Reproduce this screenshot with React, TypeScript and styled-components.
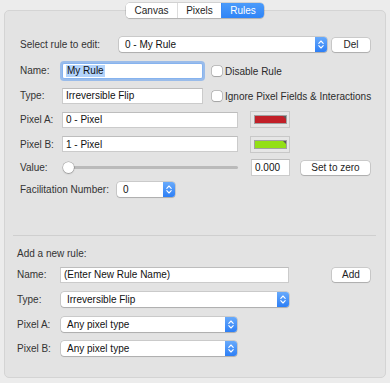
import React from "react";
import styled, { createGlobalStyle } from "styled-components";

const Global = createGlobalStyle`
  html, body { margin: 0; padding: 0; background: #ececec; }
  * { box-sizing: border-box; }
`;

const Window = styled.div`
  width: 390px;
  height: 383px;
  background: #ececec;
  font-family: "Liberation Sans", Arial, sans-serif;
  font-size: 10px;
  color: #2b2b2b;
  display: flex;
  flex-direction: column;
  align-items: center;
  padding-top: 3px;
`;

const Segmented = styled.div`
  position: relative;
  z-index: 1;
  display: flex;
  height: 15px;
  margin-bottom: -8px;
  background: #fff;
  border-radius: 4px;
  box-shadow: 0 0 0 0.5px rgba(0, 0, 0, 0.22), 0 1px 1px rgba(0, 0, 0, 0.12);
  overflow: hidden;
`;

const Segment = styled.div<{ $w: number; $active?: boolean }>`
  width: ${(p) => p.$w}px;
  display: flex;
  align-items: center;
  justify-content: center;
  color: ${(p) => (p.$active ? "#fff" : "#1e1e1e")};
  background: ${(p) => (p.$active ? "linear-gradient(#4b9bfa, #2f84f7)" : "#fff")};
  border-left: 1px solid ${(p) => (p.$active ? "#3b8af5" : "#dcdcdc")};
  &:first-child { border-left: none; }
`;

const Panel = styled.div`
  align-self: stretch;
  margin: 0 4px;
  height: 368px;
  background: #e3e3e3;
  border: 1px solid #d4d4d4;
  border-radius: 5px;
  display: flex;
  flex-direction: column;
`;

const Section = styled.div<{ $pt: number; $pl: number }>`
  display: flex;
  flex-direction: column;
  padding-top: ${(p) => p.$pt}px;
  padding-left: ${(p) => p.$pl}px;
`;

const Row = styled.div<{ $h: number }>`
  height: ${(p) => p.$h}px;
  display: flex;
  align-items: center;
`;

const Label = styled.div<{ $w: number }>`
  width: ${(p) => p.$w}px;
  flex: none;
  color: #333;
  white-space: nowrap;
`;

const Title = styled.div`
  color: #333;
`;

const Gap = styled.div<{ $w: number }>`
  width: ${(p) => p.$w}px;
  flex: none;
`;

const Field = styled.div<{ $w: number; $h?: number; $focus?: boolean }>`
  width: ${(p) => p.$w}px;
  height: ${(p) => p.$h ?? 16}px;
  flex: none;
  background: #fff;
  border: 1px solid ${(p) => (p.$focus ? "#86b3ef" : "#cbcbcb")};
  border-top-color: ${(p) => (p.$focus ? "#86b3ef" : "#bdbdbd")};
  border-radius: ${(p) => (p.$focus ? "2px" : "0")};
  box-shadow: ${(p) => (p.$focus ? "0 0 0 2px rgba(95, 157, 240, 0.55)" : "none")};
  display: flex;
  align-items: center;
  padding-left: 3px;
  color: #111;
  white-space: nowrap;
  overflow: hidden;
`;

const Selected = styled.span`
  background: #b3d4fc;
  line-height: 12px;
  padding: 0 1px;
`;

const Popup = styled.div<{ $w: number }>`
  width: ${(p) => p.$w}px;
  height: 15px;
  flex: none;
  display: flex;
  background: #fff;
  border-radius: 3px;
  box-shadow: 0 0 0 0.5px rgba(0, 0, 0, 0.22), 0 1px 1px rgba(0, 0, 0, 0.14);
  overflow: hidden;
`;

const PopupText = styled.div`
  flex: 1;
  display: flex;
  align-items: center;
  padding-left: 6px;
  color: #111;
  white-space: nowrap;
`;

const Stepper = styled.div`
  width: 12px;
  flex: none;
  background: linear-gradient(#68aafb, #2d7ff6);
  display: flex;
  align-items: center;
  justify-content: center;
`;

const Button = styled.div<{ $w: number }>`
  width: ${(p) => p.$w}px;
  height: 14px;
  flex: none;
  background: #fff;
  border-radius: 3px;
  box-shadow: 0 0 0 0.5px rgba(0, 0, 0, 0.22), 0 1px 1px rgba(0, 0, 0, 0.14);
  display: flex;
  align-items: center;
  justify-content: center;
  color: #1e1e1e;
`;

const CheckGroup = styled.div`
  display: flex;
  align-items: center;
  gap: 3px;
  padding-top: 1px;
`;

const Box = styled.div`
  width: 10px;
  height: 10px;
  background: #fff;
  border-radius: 2.5px;
  box-shadow: 0 0 0 0.5px rgba(0, 0, 0, 0.3), 0 0.5px 1px rgba(0, 0, 0, 0.15);
`;

const CheckText = styled.div`
  color: #2b2b2b;
  white-space: nowrap;
`;

const Well = styled.div`
  width: 40px;
  height: 17px;
  flex: none;
  background: #e6e6e6;
  border: 1px solid #c8c8c8;
  padding: 3px 2px 3px 3px;
  display: flex;
`;

const Swatch = styled.div<{ $c: string }>`
  position: relative;
  flex: 1;
  background: ${(p) => p.$c};
  border: 1px solid #a0a0a0;
  &::after {
    content: "";
    position: absolute;
    top: 0;
    right: 0;
    border-style: solid;
    border-width: 0 3px 3px 0;
    border-color: transparent #5a5a5a transparent transparent;
  }
`;

const Slider = styled.div<{ $w: number }>`
  position: relative;
  width: ${(p) => p.$w}px;
  height: 14px;
  flex: none;
  display: flex;
  align-items: center;
`;

const Track = styled.div`
  flex: 1;
  margin-left: 5px;
  height: 3px;
  border-radius: 2px;
  background: #bababa;
`;

const Knob = styled.div`
  position: absolute;
  left: 1px;
  top: 1.5px;
  width: 11px;
  height: 11px;
  border-radius: 50%;
  background: #fff;
  box-shadow: 0 0 0 0.5px rgba(0, 0, 0, 0.28), 0 1px 1.5px rgba(0, 0, 0, 0.22);
`;

const Separator = styled.div`
  height: 1px;
  background: #cfcfcf;
  margin: 35px 9px 0 8px;
`;

const Chevrons = () => (
  <svg width="8" height="11" viewBox="0 0 8 11">
    <path d="M1.8 4.3 L4 2 L6.2 4.3 M1.8 6.7 L4 9 L6.2 6.7" fill="none" stroke="#fff" strokeWidth="1.1" strokeLinecap="round" strokeLinejoin="round" />
  </svg>
);

const PopUp = ({ w, text }: { w: number; text: string }) => (
  <Popup $w={w}>
    <PopupText>{text}</PopupText>
    <Stepper>
      <Chevrons />
    </Stepper>
  </Popup>
);

const Check = ({ text }: { text: string }) => (
  <CheckGroup>
    <Box />
    <CheckText>{text}</CheckText>
  </CheckGroup>
);

export default function App() {
  return (
    <>
      <Global />
      <Window>
        <Segmented>
          <Segment $w={51}>Canvas</Segment>
          <Segment $w={44}>Pixels</Segment>
          <Segment $w={43} $active>Rules</Segment>
        </Segmented>
        <Panel>
          <Section $pt={21} $pl={15}>
            <Row $h={25}>
              <Label $w={99}>Select rule to edit:</Label>
              <PopUp w={208} text="0 - My Rule" />
              <Gap $w={5} />
              <Button $w={38}>Del</Button>
            </Row>
            <Row $h={27}>
              <Label $w={42}>Name:</Label>
              <Field $w={141} $focus>
                <Selected>My Rule</Selected>
              </Field>
              <Gap $w={9} />
              <Check text="Disable Rule" />
            </Row>
            <Row $h={23}>
              <Label $w={42}>Type:</Label>
              <Field $w={141}>Irreversible Flip</Field>
              <Gap $w={9} />
              <Check text="Ignore Pixel Fields & Interactions" />
            </Row>
            <Row $h={25}>
              <Label $w={42}>Pixel A:</Label>
              <Field $w={176}>0 - Pixel</Field>
              <Gap $w={12} />
              <Well>
                <Swatch $c="#c11f28" />
              </Well>
            </Row>
            <Row $h={24}>
              <Label $w={42}>Pixel B:</Label>
              <Field $w={176}>1 - Pixel</Field>
              <Gap $w={12} />
              <Well>
                <Swatch $c="#93df16" />
              </Well>
            </Row>
            <Row $h={23}>
              <Label $w={42}>Value:</Label>
              <Slider $w={176}>
                <Track />
                <Knob />
              </Slider>
              <Gap $w={13} />
              <Field $w={39} $h={17}>0.000</Field>
              <Gap $w={11} />
              <Button $w={69}>Set to zero</Button>
            </Row>
            <Row $h={21}>
              <Label $w={97}>Facilitation Number:</Label>
              <PopUp w={58} text="0" />
            </Row>
          </Section>
          <Separator />
          <Section $pt={7} $pl={12}>
            <Row $h={20}>
              <Title>Add a new rule:</Title>
            </Row>
            <Row $h={23}>
              <Label $w={43}>Name:</Label>
              <Field $w={229}>(Enter New Rule Name)</Field>
              <Gap $w={43} />
              <Button $w={38}>Add</Button>
            </Row>
            <Row $h={26}>
              <Label $w={44}>Type:</Label>
              <PopUp w={228} text="Irreversible Flip" />
            </Row>
            <Row $h={25}>
              <Label $w={44}>Pixel A:</Label>
              <PopUp w={176} text="Any pixel type" />
            </Row>
            <Row $h={23}>
              <Label $w={44}>Pixel B:</Label>
              <PopUp w={176} text="Any pixel type" />
            </Row>
          </Section>
        </Panel>
      </Window>
    </>
  );
}
